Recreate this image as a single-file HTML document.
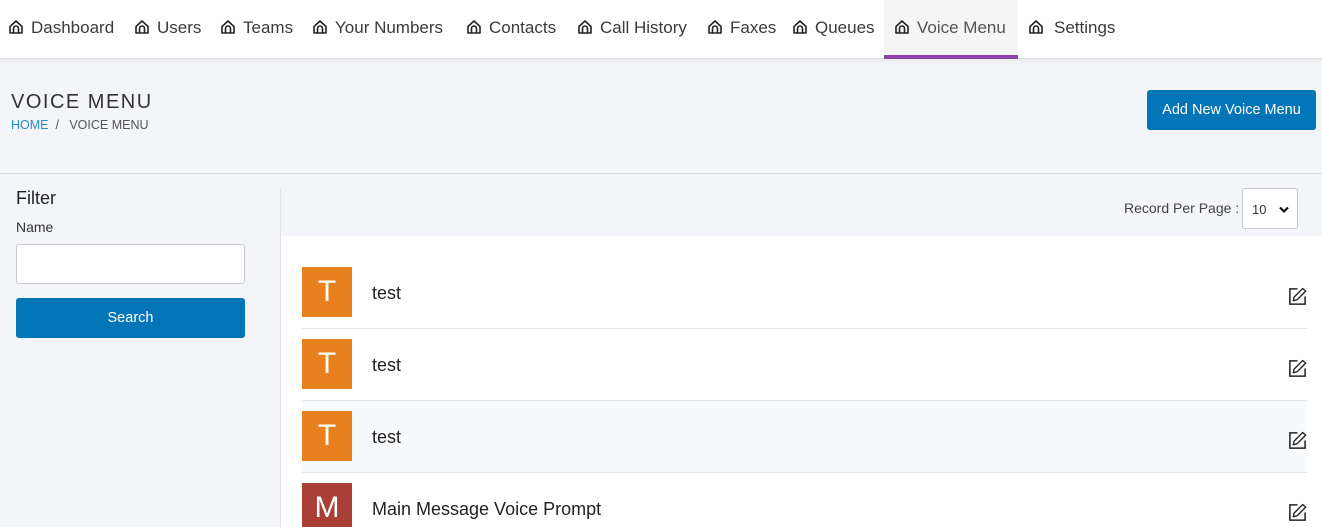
<!DOCTYPE html>
<html><head><meta charset="utf-8"><style>
*{margin:0;padding:0;box-sizing:border-box}
html{width:1322px;height:527px;overflow:hidden}
body{width:1322px;height:527px;overflow:hidden;background:#f4f5f9;font-family:"Liberation Sans",sans-serif;position:relative;color:#333}
.nav{position:absolute;left:0;top:0;width:1322px;height:59px;background:#fff;border-bottom:1px solid #dcdde0;box-shadow:0 2px 6px rgba(0,0,0,.05)}
.it{position:absolute;top:18px;font-size:17px;color:#3a3a3a;white-space:nowrap;line-height:20px}
.it svg{position:absolute;left:-23px;top:1px}
.active{position:absolute;left:884px;top:0;width:134px;height:59px;background:#f5f5f6;border-bottom:4px solid #8e44ad}
h1{position:absolute;left:11px;top:91px;font-size:20px;font-weight:normal;letter-spacing:1.5px;color:#333}
.bc{position:absolute;left:11px;top:118px;font-size:12.5px;color:#555}
.bc span{color:#2a8bc5}
.btn{position:absolute;background:#0275b8;color:#fff;border-radius:3px;text-align:center;font-size:14.5px}
.hr{position:absolute;left:0;top:173px;width:1322px;height:1px;background:#dcdde0}
.vline{position:absolute;left:280px;top:188px;width:1px;height:339px;background:#e2e3e6}
.white{position:absolute;left:281px;top:236px;width:1041px;height:291px;background:#fff}
.row{position:absolute;left:302px;width:1005px;height:72px;border-bottom:1px solid #e2e8ee}
.av{position:absolute;left:0;top:10px;width:50px;height:50px;background:#e8801e;color:#fff;font-size:30px;text-align:center;line-height:50px}
.nm{position:absolute;left:70px;top:26px;font-size:18px;color:#222}
.ed{position:absolute;right:0;top:30px}
</style></head><body>
<div class="nav">
<div class="active"></div>
</div>
<svg width="0" height="0" style="position:absolute"><defs><symbol id="h" viewBox="0 0 16 16"><path d="M2 7.5 8 2l6 5.5V14H2z M5.5 14V9.5a2.5 2.5 0 0 1 5 0V14" fill="none" stroke="#222" stroke-width="1.6" stroke-linejoin="round"/></symbol></defs></svg>
<div class="it" style="left:31px"><svg width="16" height="16"><use href="#h"/></svg>Dashboard</div>
<div class="it" style="left:157px"><svg width="16" height="16"><use href="#h"/></svg>Users</div>
<div class="it" style="left:243px"><svg width="16" height="16"><use href="#h"/></svg>Teams</div>
<div class="it" style="left:335px"><svg width="16" height="16"><use href="#h"/></svg>Your Numbers</div>
<div class="it" style="left:489px"><svg width="16" height="16"><use href="#h"/></svg>Contacts</div>
<div class="it" style="left:600px"><svg width="16" height="16"><use href="#h"/></svg>Call History</div>
<div class="it" style="left:730px"><svg width="16" height="16"><use href="#h"/></svg>Faxes</div>
<div class="it" style="left:815px"><svg width="16" height="16"><use href="#h"/></svg>Queues</div>
<div class="it" style="left:917px;color:#555"><svg width="16" height="16"><use href="#h"/></svg>Voice Menu</div>
<div class="it" style="left:1054px"><svg width="16" height="16" style="left:-26px"><use href="#h"/></svg>Settings</div>
<h1>VOICE MENU</h1>
<div class="bc"><span>HOME</span> &nbsp;/ &nbsp; VOICE MENU</div>
<div class="btn" style="left:1147px;top:90px;width:169px;height:40px;line-height:40px">Add New Voice Menu</div>
<div class="hr"></div>
<div style="position:absolute;left:16px;top:188px;font-size:18px;color:#222">Filter</div>
<div style="position:absolute;left:16px;top:219px;font-size:14px;color:#333">Name</div>
<div style="position:absolute;left:16px;top:244px;width:229px;height:40px;background:#fff;border:1px solid #c8c9cc;border-radius:3px"></div>
<div class="btn" style="left:16px;top:298px;width:229px;height:40px;line-height:40px">Search</div>
<div class="vline"></div>
<div style="position:absolute;left:1124px;top:200px;font-size:14px;color:#444">Record Per Page :</div>
<div style="position:absolute;left:1242px;top:188px;width:56px;height:41px;background:#fff;border:1px solid #c8c9cc;border-radius:3px;font-size:13px;line-height:41px;padding-left:9px">10<svg width="10" height="8" style="position:absolute;right:8px;top:17px"><path d="M1 1.5 5 5.5 9 1.5" fill="none" stroke="#111" stroke-width="2.2"/></svg></div>
<div class="white"></div>
<svg width="0" height="0" style="position:absolute"><defs><symbol id="e" viewBox="0 0 20 20"><path d="M10 2H2v16h16v-8" fill="none" stroke="#222" stroke-width="1.6"/><path d="M15.5 1.5l3 3-9 9-4 1 1-4z" fill="none" stroke="#222" stroke-width="1.4" stroke-linejoin="round"/></symbol></defs></svg>
<div class="row" style="top:257px"><div class="av">T</div><div class="nm">test</div><svg class="ed" width="19" height="19"><use href="#e"/></svg></div>
<div class="row" style="top:329px"><div class="av">T</div><div class="nm">test</div><svg class="ed" width="19" height="19"><use href="#e"/></svg></div>
<div class="row" style="top:401px;background:#f8f9fb"><div class="av">T</div><div class="nm">test</div><svg class="ed" width="19" height="19"><use href="#e"/></svg></div>
<div class="row" style="top:473px;height:54px;border:none;overflow:hidden"><div class="av" style="background:#a93f35">M</div><div class="nm">Main Message Voice Prompt</div><svg class="ed" width="19" height="19"><use href="#e"/></svg></div>
</body></html>
